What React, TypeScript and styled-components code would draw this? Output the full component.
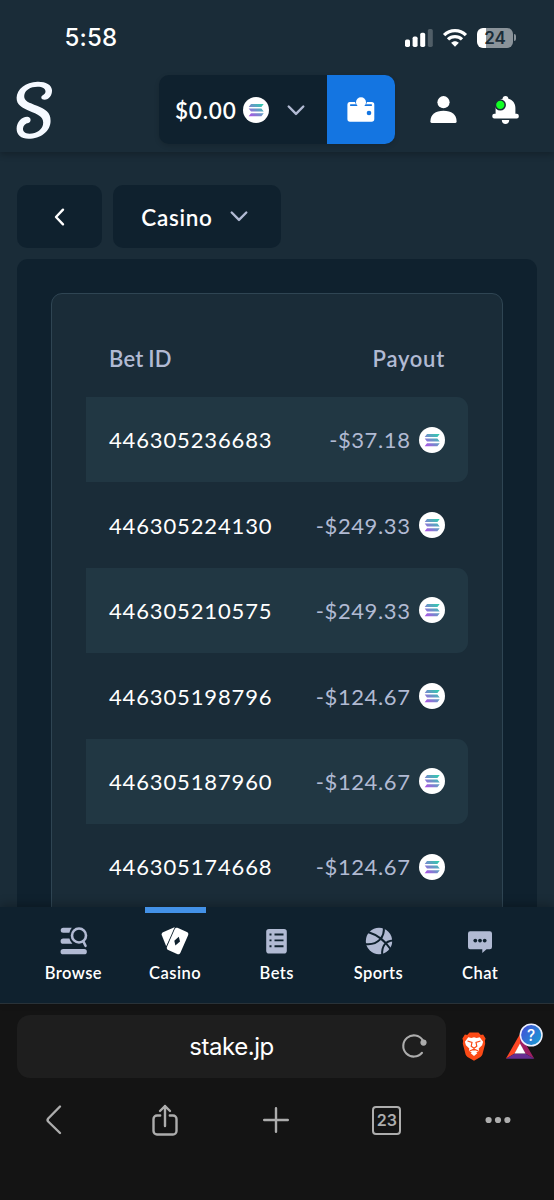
import React from 'react';
import styled, { createGlobalStyle } from 'styled-components';

const GlobalStyle = createGlobalStyle`
  * { box-sizing: border-box; }
  html, body { margin: 0; padding: 0; background: #1a2c38; }
  body { overflow: hidden; }
  svg { display: block; flex: none; overflow: visible; }
  button { border: 0; padding: 0; margin: 0; background: none; color: inherit; font: inherit; }
`;

const Screen = styled.div`
  width: 554px;
  height: 1200px;
  display: flex;
  flex-direction: column;
  overflow: hidden;
  background: #1a2c38;
  color: #fff;
  font-family: Lato, "Open Sans", sans-serif;
`;

const Header = styled.header`
  flex: none;
  height: 152px;
  background: #1a2c38;
  box-shadow: 0 3px 6px rgba(0, 0, 0, 0.22);
  z-index: 1;
`;

const StatusBar = styled.div`
  height: 75px;
  padding: 0 38px 0 64.5px;
  display: flex;
  align-items: center;
`;

const Time = styled.span`
  font: 500 24px/30px Inter, sans-serif;
  letter-spacing: 0.2px;
`;

const StatusIcons = styled.div`
  margin-left: auto;
  display: flex;
  align-items: center;
  gap: 10px;
`;

const Battery = styled.span`
  display: flex;
  align-items: center;
  gap: 1px;
`;

const BatteryBody = styled.span`
  width: 36px;
  height: 20px;
  border-radius: 6px;
  background: linear-gradient(90deg, #fff 24%, #8a939a 24%);
  color: #1a2c38;
  font: 600 17px/20px Inter, sans-serif;
  text-align: center;
`;

const BatteryTip = styled.span`
  width: 2px;
  height: 7px;
  border-radius: 0 3px 3px 0;
  background: #8a939a;
`;

const TopNav = styled.div`
  height: 69px;
  padding: 0 35px 0 16px;
  display: flex;
  align-items: center;
`;

const Wallet = styled.div`
  margin-left: 107px;
  height: 69px;
  display: flex;
  border-radius: 10px;
  overflow: hidden;
  background: #0f212e;
  box-shadow: 0 2px 5px rgba(0, 0, 0, 0.15);
`;

const Balance = styled.button`
  width: 168px;
  padding: 1px 0 0 16px;
  display: flex;
  align-items: center;
  font-size: 22.5px;
  font-weight: 600;
  letter-spacing: 0.8px;
  svg:first-of-type { margin-left: 6.5px; }
  svg:last-of-type { margin-left: 18px; }
`;

const WalletButton = styled.button`
  width: 68px;
  display: grid;
  place-items: center;
  background: #1475e1;
`;

const HeaderActions = styled.div`
  margin-left: auto;
  display: flex;
  gap: 35px;
`;

const Content = styled.main`
  flex: 1;
  min-height: 0;
  padding: 33px 17px 0;
  overflow: hidden;
`;

const Filters = styled.div`
  display: flex;
  gap: 11px;
`;

const FilterButton = styled.button<{ $width: number }>`
  width: ${(p) => p.$width}px;
  height: 63px;
  display: flex;
  align-items: center;
  justify-content: center;
  gap: 17px;
  border-radius: 10px;
  background: #0f212e;
  font-size: 22.5px;
  font-weight: 600;
  letter-spacing: 0.7px;
`;

const FilterLabel = styled.span`
  padding-top: 2px;
  margin-left: -5px;
`;

const Panel = styled.section`
  margin-top: 11px;
  padding: 34px 34px 0;
  border-radius: 11px;
  background: #0f212e;
`;

const Card = styled.div`
  height: 700px;
  padding: 33px 34px 0;
  border: 1.5px solid #2f4553;
  border-radius: 11px;
  background: #1a2c38;
`;

const TableHead = styled.div`
  height: 70px;
  padding: 1px 23px 8px;
  display: flex;
  align-items: center;
  justify-content: space-between;
  color: #b1bad3;
  font-size: 22px;
  font-weight: 600;
  letter-spacing: 0.6px;
`;

const HeadLabel = styled.span<{ $tight?: boolean }>`
  letter-spacing: ${(p) => (p.$tight ? '0.2px' : '0.75px')};
  word-spacing: ${(p) => (p.$tight ? '-0.8px' : '0')};
`;

const Row = styled.div<{ $shaded: boolean }>`
  height: 85.4px;
  padding: 0 23.5px 0 23px;
  display: flex;
  align-items: center;
  border-radius: 0 11px 11px 0;
  background: ${(p) => (p.$shaded ? '#213743' : 'transparent')};
  font-size: 22px;
`;

const BetId = styled.span`
  padding-top: 0.6px;
  letter-spacing: 0.86px;
`;

const Payout = styled.span`
  margin-left: auto;
  display: flex;
  align-items: center;
  color: #b1bad3;
`;

const Amount = styled.span`
  padding-top: 0.6px;
  margin-right: 8px;
  letter-spacing: 0.6px;
`;

const TabBar = styled.nav`
  flex: none;
  height: 97px;
  padding: 0 23px 0 22.5px;
  display: flex;
  background: #0f212e;
  border-bottom: 1px solid #293238;
  box-shadow: 0 -3px 9px rgba(0, 0, 0, 0.25);
  z-index: 1;
`;

const Tab = styled.button<{ $active?: boolean }>`
  flex: 1;
  display: flex;
  flex-direction: column;
  align-items: center;
  color: ${(p) => (p.$active ? '#fff' : '#b1bad3')};
  &::before {
    content: '';
    width: 61px;
    height: 6px;
    margin-bottom: 14px;
    background: ${(p) => (p.$active ? '#4391e7' : 'transparent')};
  }
`;

const TabLabel = styled.span`
  margin-top: 8px;
  color: #fff;
  font-size: 16.5px;
  font-weight: 600;
  line-height: 20px;
  letter-spacing: 0.45px;
`;

const Browser = styled.footer`
  flex: none;
  height: 196px;
  padding: 11px 11px 0 17px;
  background: #141414;
`;

const AddressRow = styled.div`
  height: 63px;
  display: flex;
  align-items: center;
`;

const AddressBar = styled.div`
  width: 429px;
  height: 63px;
  padding: 0 19px 3px 44px;
  display: flex;
  align-items: center;
  border-radius: 13px;
  background: #1e1e1e;
`;

const Url = styled.span`
  flex: 1;
  padding-top: 4px;
  text-align: center;
  font: 400 24px/30px Inter, sans-serif;
  letter-spacing: -0.45px;
`;

const BrowserIcons = styled.div`
  margin-left: 16px;
  height: 48px;
  display: flex;
  align-items: flex-start;
  gap: 19px;
  svg:first-child { margin-top: 9px; }
`;

const Toolbar = styled.div`
  height: 84px;
  margin: 0 -10px 0 -18px;
  display: grid;
  grid-template-columns: repeat(5, 1fr);
  place-items: center;
  color: #adadad;
`;

const TabCount = styled.span`
  width: 29px;
  height: 29px;
  display: grid;
  place-items: center;
  border: 2px solid currentColor;
  border-radius: 4px;
  font: 600 16px/1 Inter, sans-serif;
`;

const Logo = () => (
  <svg width="36" height="58" viewBox="0 -0.500 36 58" fill="#f5f9ff">
    <path d="M36 8.500C35.500 3 29.500 0 21.500.2C9.500.6.8 7.500.6 16.300C.5 23.500 6 26.300 13.500 29.600C21.500 33 27 34.800 27.200 41C27.300 48 20.500 52.200 13.500 52.200C8.800 52.200 6.600 49.800 7 46.800C7.400 43.600 9.500 42 12.300 41.500C15.500 41 15.600 35.300 11.200 35.300C5.500 35.300.8 41 .6 47C.5 53.500 5 57.300 12.500 57.300C24.500 57.300 34.400 50 34.600 39.500C34.700 30.500 29 27.800 21 24.300C13 21 8 19.800 8.200 14.500C8.500 8.500 14.500 5.200 21.500 5.200C26.500 5.200 29.500 7 29.500 10C29.500 11.800 28.200 12.800 26.800 13.700C24.300 15.200 25 18.200 28.500 18.200C33 18.200 36.300 13.800 36 8.500z" />
  </svg>
);

const Coin = () => (
  <svg width="26" height="26" viewBox="0 0 26 26">
    <defs>
      <linearGradient id="sol" x1="7" y1="20" x2="19" y2="6" gradientUnits="userSpaceOnUse">
        <stop stopColor="#b14fe8" />
        <stop offset=".5" stopColor="#6d93c8" />
        <stop offset="1" stopColor="#2bd0ac" />
      </linearGradient>
    </defs>
    <circle cx="13" cy="13" r="13" fill="#fff" />
    <path fill="url(#sol)" d="M8 6.900h12.700l-2.300 3H5.700zM5.700 11.500h12.700l2.300 3H8zM8 16.200h12.700l-2.300 3H5.700z" />
  </svg>
);

const Chevron = () => (
  <svg width="18" height="11" viewBox="0 0 18 11" fill="none" stroke="#b1bad3" strokeWidth="2.400" strokeLinecap="round" strokeLinejoin="round">
    <path d="M1.700 1.500 9 8.900l7.300-7.400" />
  </svg>
);

const Signal = () => (
  <svg width="28" height="18" viewBox="0 0 28 18" fill="#fff">
    <rect y="10.500" width="5" height="7.500" rx="1.700" />
    <rect x="7.600" y="7.500" width="5" height="10.500" rx="1.700" />
    <rect x="15.200" y="3.800" width="5" height="14.200" rx="1.700" />
    <rect x="22.800" width="5" height="18" rx="1.700" opacity=".24" />
  </svg>
);

const Wifi = () => (
  <svg width="24" height="18" viewBox="0 0 24 18" fill="none" stroke="#fff" strokeWidth="3.300">
    <path d="M1.100 6.100C7.200.1 16.800.1 22.900 6.100M5 10.400c4-3.800 10-3.800 14 0" />
    <path fill="#fff" stroke="none" d="M8.100 13.800c2.300-2.100 5.500-2.100 7.800 0L12 17.800z" />
  </svg>
);

const WalletIcon = () => (
  <svg width="28" height="26" viewBox="0 0 28 26" fill="#fff">
    <path d="M2.500 5H8a6 6 0 0 0 1 2.200H3.800a.9.9 0 0 0 0 1.800h20.400a.9.9 0 0 0 0-1.800H19A6 6 0 0 0 20 5h4.500A2.700 2.700 0 0 1 27.300 7.700V22a2.700 2.700 0 0 1-2.700 2.700H3A2.700 2.700 0 0 1 .4 22V7.500A2.500 2.500 0 0 1 2.500 5z" />
    <circle cx="14" cy="5.200" r="5" />
    <circle cx="22" cy="16" r="2.300" fill="#1475e1" />
  </svg>
);

const UserIcon = () => (
  <svg width="27" height="27" viewBox="0 0 27 27" fill="#fff">
    <circle cx="13.500" cy="6.200" r="6.100" />
    <path d="M2 27a1.600 1.600 0 0 1-1.600-1.600C.4 18.500 5.500 14.700 13.500 14.700s13.100 3.800 13.100 10.700A1.600 1.600 0 0 1 25 27z" />
  </svg>
);

const BellIcon = () => (
  <svg width="27" height="28" viewBox="0 0 27 28" fill="#fff">
    <path d="M13.500 0c1.800 0 2.900 1.200 2.900 2.700 4.400 1.200 7 4.700 7 9.200v5.800h1.300a2.100 2.100 0 0 1 2.100 2.100v.8a2 2 0 0 1-2 2H2.300a2 2 0 0 1-2-2v-.8a2.100 2.100 0 0 1 2.100-2.100h1.200v-5.800c0-4.500 2.600-8 7-9.200C10.600 1.200 11.700 0 13.500 0zM9.800 24h7.400c0 2.500-1.600 3.900-3.700 3.900S9.800 26.500 9.800 24z" />
    <circle cx="8.300" cy="8.900" r="4.900" fill="#12ff24" stroke="#1a2c38" strokeWidth="1.500" />
  </svg>
);

const BrowseIcon = () => (
  <svg width="28" height="28" viewBox="-1 0 28 28">
    <path fill="currentColor" d="M3.200.8h8.600a11 11 0 0 0-2.400 5H3.200a2.500 2.500 0 0 1 0-5zM3.200 11.600h6.200a11 11 0 0 0 3 5.200H3.200a2.600 2.600 0 0 1 0-5.200zM3.200 22h21a2.600 2.600 0 0 1 0 5.300h-21a2.600 2.600 0 0 1 0-5.300z" />
    <g fill="none" stroke="currentColor" strokeWidth="2.600">
      <circle cx="19" cy="8.500" r="7" />
      <path strokeLinecap="round" d="m23.300 14.300 2.200 4.500" />
    </g>
  </svg>
);

const CasinoIcon = () => (
  <svg width="28" height="28" viewBox="0 0 28 28" fill="currentColor">
    <path d="M2 5.300 12.300.8c1-.4 2-.2 2.500.3L5.300 19.500.7 8c-.4-1 .3-2.200 1.300-2.700z" />
    <path stroke="#0f212e" strokeWidth="1.800" paintOrder="stroke" d="m17 1 8.900 4.100c1.300.6 1.800 1.800 1.200 3.100L19.300 25.900c-.6 1.300-1.900 1.800-3.200 1.200l-8.900-4.100c-1.300-.6-1.700-1.900-1.200-3.200L13.800 2.100C14.400.9 15.700.4 17 1z" />
    <path fill="#0f212e" d="m17.800 9.700-4.500 4 1.100 4.700 4.600-4z" />
  </svg>
);

const BetsIcon = () => (
  <svg width="28" height="28" viewBox="0.500 0 28 28">
    <rect x="3.700" y="2" width="20.600" height="24.500" rx="2.800" fill="currentColor" />
    <path stroke="#0f212e" strokeWidth="1.900" d="M7 7.500h2m3 0h9M7 13.400h2m3 0h9M7 19.300h2m3 0h9" />
  </svg>
);

const SportsIcon = () => (
  <svg width="28" height="28" viewBox="-1 0 28 28">
    <circle cx="14" cy="14" r="13.200" fill="currentColor" />
    <g fill="none" stroke="#0f212e" strokeWidth="2">
      <path d="M3 5c8 2.500 16.500 8 22.500 17" />
      <path d="M18.800 0c1 9.500-5.300 18.500-18.500 17" />
      <path d="M28 13.500c-7.800.5-11.500 6-10.800 14.500" />
    </g>
  </svg>
);

const ChatIcon = () => (
  <svg width="28" height="28" viewBox="0 0 28 28">
    <path fill="currentColor" d="M4.200 4.300h19.600A2.200 2.200 0 0 1 26 6.500v13.500a2.200 2.200 0 0 1-2.200 2.200h-3.300L16.300 26v-3.800H4.200A2.200 2.200 0 0 1 2 20v-13.500a2.200 2.200 0 0 1 2.200-2.200z" />
    <g fill="#0f212e"><circle cx="9.300" cy="13.600" r="1.900" /><circle cx="14" cy="13.600" r="1.900" /><circle cx="18.700" cy="13.600" r="1.900" /></g>
  </svg>
);

const BraveIcon = () => (
  <svg width="24" height="29" viewBox="0 0 24 29">
    <path fill="#fb4a16" d="M7.500.5h9l2.300 2.400 2.300-.3 2.500 4-.7 2.200.3 3-2.800 10.700c-.3 1-1 1.800-1.900 2.400L12 28.700l-6.500-3.800c-.9-.6-1.600-1.400-1.900-2.400L.8 11.800l.3-3-.7-2.200 2.500-4 2.300.3z" />
    <path fill="#fff" d="m6.300 5.300 3 .6 2.700-.7 2.700.7 3-.6 3.400 4.500-1 3.500-3.400 3.200.4 2.200L12 22.300l-5.100-3.600.4-2.200-3.400-3.200-1-3.500z" />
    <path fill="none" stroke="#fb4a16" strokeWidth="1.200" d="m5.500 9 4.500 1.300-.8 3.900 2.800 2 2.800-2-.8-3.900L18.500 9M12 16v2.500m-4.500.5L12 17.200l4.500 1.800" />
    <path fill="#fff" d="m8.700 21.300 3.300-2 3.300 2-3.300 2.600z" />
  </svg>
);

const RewardsIcon = () => (
  <svg width="38" height="36" viewBox="0 0 38 36">
    <defs>
      <linearGradient id="help" x1="17" y1="5" x2="37" y2="20" gradientUnits="userSpaceOnUse">
        <stop stopColor="#4352d8" /><stop offset="1" stopColor="#16a0d2" />
      </linearGradient>
    </defs>
    <path fill="#ff4724" d="M15 11v10.500l-5.300 9L.8 35.800z" />
    <path fill="#9e1f63" d="m15 11 14.300 24.800-9-5.300L15 21.500z" />
    <path fill="#662d91" d="M.8 35.800 9.700 30.500h10.600l9 5.300z" />
    <path fill="#fff" d="m15 20.500 5.500 10h-11z" />
    <circle cx="26.200" cy="12" r="10.800" fill="url(#help)" stroke="#eef2ff" strokeWidth="1.500" />
    <text x="26.200" y="17.500" fill="#fff" textAnchor="middle" fontFamily="Inter, sans-serif" fontSize="15.500" fontWeight="500">?</text>
  </svg>
);

const ReloadIcon = () => (
  <svg width="25" height="26" viewBox="0 0 25 26">
    <path fill="none" stroke="#adadad" strokeWidth="2.100" strokeLinecap="round" d="M20.700 8.100A10.600 10.600 0 1 0 20 20.800" />
    <circle cx="21.500" cy="10.600" r="3.100" fill="#adadad" />
  </svg>
);

const line = { fill: 'none', stroke: 'currentColor', strokeWidth: 2.4, strokeLinecap: 'round', strokeLinejoin: 'round' } as const;

const bets = [
  { id: '446305236683', payout: '-$37.18' },
  { id: '446305224130', payout: '-$249.33' },
  { id: '446305210575', payout: '-$249.33' },
  { id: '446305198796', payout: '-$124.67' },
  { id: '446305187960', payout: '-$124.67' },
  { id: '446305174668', payout: '-$124.67' },
];

const tabs = [
  { label: 'Browse', icon: <BrowseIcon /> },
  { label: 'Casino', icon: <CasinoIcon />, active: true },
  { label: 'Bets', icon: <BetsIcon /> },
  { label: 'Sports', icon: <SportsIcon /> },
  { label: 'Chat', icon: <ChatIcon /> },
];

export default function App() {
  return (
    <Screen>
      <GlobalStyle />
      <Header>
        <StatusBar>
          <Time>5:58</Time>
          <StatusIcons>
            <Signal />
            <Wifi />
            <Battery><BatteryBody>24</BatteryBody><BatteryTip /></Battery>
          </StatusIcons>
        </StatusBar>
        <TopNav>
          <Logo />
          <Wallet>
            <Balance>$0.00<Coin /><Chevron /></Balance>
            <WalletButton aria-label="Wallet"><WalletIcon /></WalletButton>
          </Wallet>
          <HeaderActions>
            <UserIcon />
            <BellIcon />
          </HeaderActions>
        </TopNav>
      </Header>
      <Content>
        <Filters>
          <FilterButton $width={85} aria-label="Back">
            <svg width="11" height="18" viewBox="0 0 11 18" {...line}><path d="M9 1.700 2 9l7 7.300" /></svg>
          </FilterButton>
          <FilterButton $width={168}><FilterLabel>Casino</FilterLabel><Chevron /></FilterButton>
        </Filters>
        <Panel>
          <Card>
            <TableHead><HeadLabel $tight>Bet ID</HeadLabel><HeadLabel>Payout</HeadLabel></TableHead>
            {bets.map((bet, i) => (
              <Row key={bet.id} $shaded={i % 2 === 0}>
                <BetId>{bet.id}</BetId>
                <Payout><Amount>{bet.payout}</Amount><Coin /></Payout>
              </Row>
            ))}
          </Card>
        </Panel>
      </Content>
      <TabBar>
        {tabs.map((tab) => (
          <Tab key={tab.label} $active={tab.active}>
            {tab.icon}
            <TabLabel>{tab.label}</TabLabel>
          </Tab>
        ))}
      </TabBar>
      <Browser>
        <AddressRow>
          <AddressBar><Url>stake.jp</Url><ReloadIcon /></AddressBar>
          <BrowserIcons><BraveIcon /><RewardsIcon /></BrowserIcons>
        </AddressRow>
        <Toolbar>
          <svg width="16" height="30" viewBox="0 0 16 30" {...line}><path d="M14 1.500 2.200 13.500q-1.300 1.500 0 3L14 28" /></svg>
          <svg width="26" height="32" viewBox="0 0 26 32" {...line}><path d="M8.200 11.500H5a3.500 3.500 0 0 0-3.500 3.500v12A3.500 3.500 0 0 0 5 30.500h16a3.500 3.500 0 0 0 3.500-3.500V15a3.500 3.500 0 0 0-3.500-3.500h-3.200M13 22V2m-5 5 5-5 5 5" /></svg>
          <svg width="26" height="26" viewBox="0 0 26 26" {...line}><path d="M13 1.200v23.600M1.200 13h23.600" /></svg>
          <TabCount>23</TabCount>
          <svg width="26" height="8" viewBox="0 0 26 8" fill="currentColor"><circle cx="3.600" cy="4" r="3.100" /><circle cx="13" cy="4" r="3.100" /><circle cx="22.400" cy="4" r="3.100" /></svg>
        </Toolbar>
      </Browser>
    </Screen>
  );
}
